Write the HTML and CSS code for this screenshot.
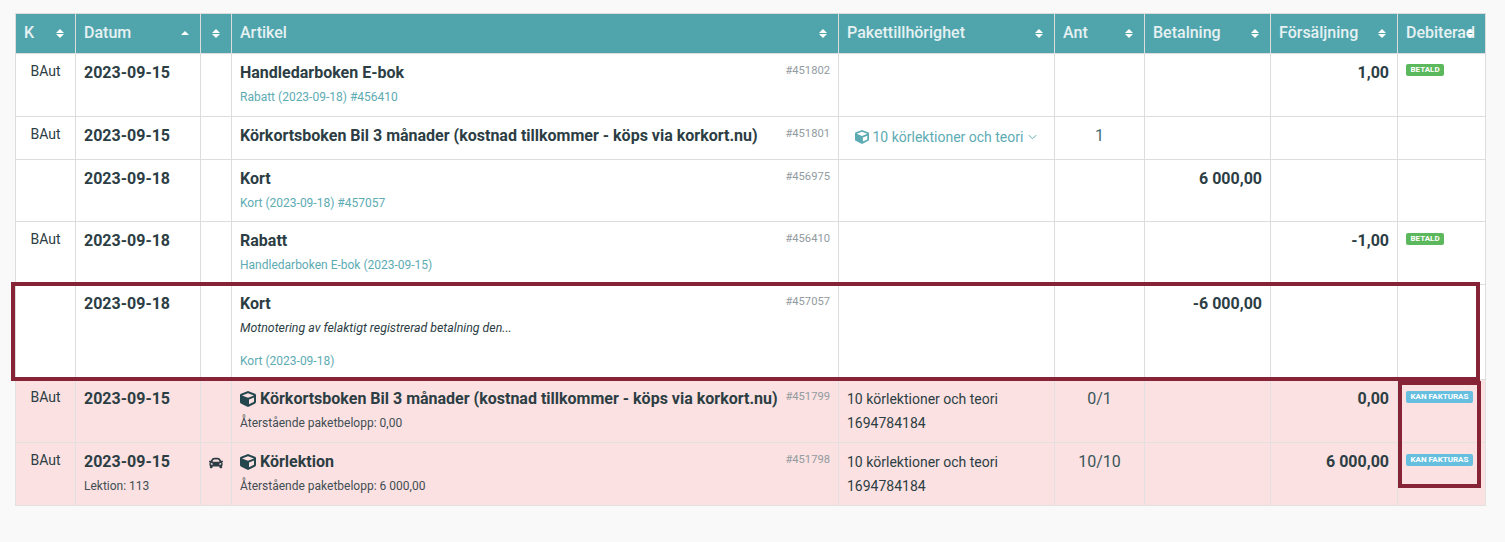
FILE: index.html
```html
<!DOCTYPE html>
<html lang="sv">
<head>
<meta charset="utf-8">
<title>Artiklar</title>
<link rel="stylesheet" href="styles.css">
</head>
<body>
<svg class="defs" width="0" height="0" aria-hidden="true">
  <symbol id="cube" viewBox="0 0 512 512">
    <path fill="currentColor" fill-rule="evenodd" d="M239.100 6.300l-208 78c-18.700 7-31.100 25-31.100 45v225.100c0 18.200 10.300 34.800 26.500 42.900l208 104c13.500 6.800 29.400 6.800 42.900 0l208-104c16.300-8.100 26.500-24.800 26.500-42.900V129.300c0-20-12.400-37.900-31.100-44.900l-208-78C262 2.200 250 2.200 239.100 6.300zM256 68.400l192 72v1.100l-192 78-192-78v-1.100l192-72zm32 356V275.500l160-65v133.900l-160 80z"/>
  </symbol>
  <symbol id="car" viewBox="0 0 512 512">
    <path fill="currentColor" d="M499.990 176h-59.870l-16.640-41.600C406.380 91.630 365.570 64 319.500 64h-127c-46.060 0-86.880 27.630-103.990 70.400L71.870 176H12.010C4.200 176-1.530 183.340.37 190.910l6 24C7.700 220.250 12.500 224 18.010 224h20.070C24.650 235.730 16 252.780 16 272v48c0 16.120 6.160 30.670 16 41.930V416c0 17.670 14.330 32 32 32h32c17.670 0 32-14.330 32-32v-32h256v32c0 17.670 14.330 32 32 32h32c17.670 0 32-14.330 32-32v-54.070c9.840-11.250 16-25.800 16-41.930v-48c0-19.220-8.650-36.270-22.070-48H494c5.510 0 10.310-3.750 11.640-9.090l6-24c1.890-7.570-3.840-14.910-11.650-14.910zm-352.060-17.830c7.290-18.220 24.940-30.170 44.570-30.170h127c19.630 0 37.280 11.950 44.570 30.170L384 208H128l19.930-49.830zM96 319.800c-19.200 0-32-12.760-32-31.900S76.800 256 96 256s48 28.710 48 47.850-28.800 15.950-48 15.950zm320 0c-19.200 0-48 3.190-48-15.950S396.800 256 416 256s32 12.760 32 31.900-12.800 31.900-32 31.900z"/>
  </symbol>
</svg>
<main class="page">
  <div class="table-wrap">
    <table class="grid">
      <colgroup>
        <col class="c-k"><col class="c-date"><col class="c-icon"><col class="c-art"><col class="c-pkg"><col class="c-ant"><col class="c-pay"><col class="c-sale"><col class="c-deb">
      </colgroup>
      <thead>
        <tr>
          <th class="sort">K</th>
          <th class="sort asc">Datum</th>
          <th class="sort"></th>
          <th class="sort">Artikel</th>
          <th class="sort">Pakettillhörighet</th>
          <th class="sort">Ant</th>
          <th class="sort">Betalning</th>
          <th class="sort">Försäljning</th>
          <th class="sort">Debiterad</th>
        </tr>
      </thead>
      <tbody>
        <tr class="r1">
          <td class="k">BAut</td>
          <td class="date">2023-09-15</td>
          <td></td>
          <td class="art"><span class="id">#451802</span><div class="title">Handledarboken E-bok</div><div class="sub"><span class="link">Rabatt</span> <span class="link">(2023-09-18) #456410</span></div></td>
          <td></td><td></td><td></td>
          <td class="num">1,00</td>
          <td><span class="badge paid">Betald</span></td>
        </tr>
        <tr class="r2">
          <td class="k">BAut</td>
          <td class="date">2023-09-15</td>
          <td></td>
          <td class="art"><span class="id">#451801</span><div class="title">Körkortsboken Bil 3 månader (kostnad tillkommer - köps via korkort.nu)</div></td>
          <td class="pkg-link"><svg class="i-cube-sm"><use href="#cube"/></svg> 10 körlektioner och teori <svg class="chev" viewBox="0 0 10 6"><path d="M1 1l4 4 4-4" fill="none" stroke="currentColor" stroke-width="1.100"/></svg></td>
          <td class="ant">1</td>
          <td></td><td></td><td></td>
        </tr>
        <tr class="r3">
          <td></td>
          <td class="date">2023-09-18</td>
          <td></td>
          <td class="art"><span class="id">#456975</span><div class="title">Kort</div><div class="sub"><span class="link">Kort (2023-09-18) #457057</span></div></td>
          <td></td><td></td>
          <td class="num">6 000,00</td>
          <td></td><td></td>
        </tr>
        <tr class="r4">
          <td class="k">BAut</td>
          <td class="date">2023-09-18</td>
          <td></td>
          <td class="art"><span class="id">#456410</span><div class="title">Rabatt</div><div class="sub"><span class="link">Handledarboken E-bok (2023-09-15)</span></div></td>
          <td></td><td></td><td></td>
          <td class="num">-1,00</td>
          <td><span class="badge paid">Betald</span></td>
        </tr>
        <tr class="r5">
          <td></td>
          <td class="date">2023-09-18</td>
          <td></td>
          <td class="art"><span class="id">#457057</span><div class="title">Kort</div><div class="note">Motnotering av felaktigt registrerad betalning den...</div><div class="sub"><span class="link">Kort (2023-09-18)</span></div></td>
          <td></td><td></td>
          <td class="num">-6 000,00</td>
          <td></td><td></td>
        </tr>
        <tr class="r6 pink">
          <td class="k">BAut</td>
          <td class="date">2023-09-15</td>
          <td></td>
          <td class="art"><span class="id">#451799</span><div class="title"><svg class="i-cube"><use href="#cube"/></svg>Körkortsboken Bil 3 månader (kostnad tillkommer - köps via korkort.nu)</div><div class="sub plain">Återstående paketbelopp: 0,00</div></td>
          <td class="pkg">10 körlektioner och teori<br>1694784184</td>
          <td class="ant">0/1</td>
          <td></td>
          <td class="num">0,00</td>
          <td><span class="badge can">Kan fakturas</span></td>
        </tr>
        <tr class="r7 pink">
          <td class="k">BAut</td>
          <td class="date">2023-09-15<div class="sub plain lesson">Lektion: 113</div></td>
          <td class="car-cell"><svg class="i-car"><use href="#car"/></svg></td>
          <td class="art"><span class="id">#451798</span><div class="title"><svg class="i-cube"><use href="#cube"/></svg>Körlektion</div><div class="sub plain">Återstående paketbelopp: 6 000,00</div></td>
          <td class="pkg">10 körlektioner och teori<br>1694784184</td>
          <td class="ant">10/10</td>
          <td></td>
          <td class="num">6 000,00</td>
          <td><span class="badge can">Kan fakturas</span></td>
        </tr>
      </tbody>
    </table>
    <div class="mark mark-row"></div>
    <div class="mark mark-cell"></div>
  </div>
</main>
</body>
</html>
```
FILE: styles.css
```css
* { box-sizing: border-box; }
html, body { margin: 0; padding: 0; }
body {
  height: 542px;
  overflow: hidden;
  background: #f9f9f9;
  font-family: Roboto, "Liberation Sans", sans-serif;
  color: #2c3e44;
}
.defs { position: absolute; }
.page { padding: 13px 20px 0 15px; }
.table-wrap { position: relative; width: 1470px; }
.grid {
  width: 1470px;
  table-layout: fixed;
  border-collapse: collapse;
  background: #fff;
  font-size: 14px;
  border: 1px solid #ddd;
}
.c-k { width: 60px; }
.c-date { width: 125px; }
.c-icon { width: 31px; }
.c-art { width: 607px; }
.c-pkg { width: 216px; }
.c-ant { width: 90px; }
.c-pay { width: 126px; }
.c-sale { width: 127px; }
.c-deb { width: 88px; }
th, td { border: 1px solid #ddd; vertical-align: top; padding: 8px; }
thead tr { height: 40px; }
th {
  background: #50a5ad;
  color: #e6f1f2;
  font-size: 16px;
  font-weight: 500;
  text-align: left;
  white-space: nowrap;
  position: relative;
  line-height: 22px;
  padding: 8px;
}
th.sort::before,
th.sort::after {
  content: "";
  position: absolute;
  right: 11px;
  width: 8px;
  height: 4px;
  background: #fff;
}
th.sort::before { top: 15px; clip-path: polygon(50% 0, 100% 100%, 0 100%); }
th.sort::after { top: 20px; clip-path: polygon(0 0, 100% 0, 50% 100%); }
th.asc::before { top: 17px; }
th.asc::after { display: none; }
.r1 { height: 63px; }
.r2 { height: 43px; }
.r3 { height: 62px; }
.r4 { height: 63px; }
.r5 { height: 95px; }
.r6 { height: 63px; }
.r7 { height: 63px; }
.pink td { background: #fbe1e1; border-color: #e3e0e0; }
.k { text-align: center; font-size: 14px; line-height: 20px; padding-top: 7px; }
.date { font-size: 16px; font-weight: 700; line-height: 22px; padding-top: 8px; }
.art { position: relative; }
.id { position: absolute; right: 8px; top: 9px; font-size: 11.2px; line-height: 16px; color: #929b9f; }
.title { font-size: 16px; font-weight: 700; line-height: 22px; white-space: nowrap; }
.sub { font-size: 12px; line-height: 17px; margin-top: 5px; font-weight: 400; }
.sub.plain { color: #3f4e54; }
.link { color: #5dabb3; }
.note { font-size: 12.35px; font-style: italic; line-height: 17px; margin-top: 5px; margin-bottom: 16px; }
.note + .sub { margin-top: 0; }
.num { font-size: 16px; font-weight: 700; line-height: 22px; text-align: right; }
.ant { font-size: 16px; text-align: center; line-height: 22px; color: #3f6a70; }
.pink .ant { color: #3a555b; }
.pkg { font-size: 14px; line-height: 23.5px; padding: 8px 8px 6px; }
.pkg-link { color: #5dabb3; font-size: 14px; line-height: 22px; padding: 9px 8px 8px 16px; white-space: nowrap; }
.i-cube-sm { width: 14px; height: 14px; vertical-align: -2px; color: #5dabb3; }
.chev { width: 9px; height: 6px; vertical-align: 2px; margin-left: 1px; color: #5dabb3; }
.i-cube { width: 16px; height: 16px; margin-right: 4px; vertical-align: -3px; color: #24464d; }
.car-cell { text-align: center; padding: 13px 0 0; }
.i-car { width: 14px; height: 14px; display: inline-block; color: #2c3e44; }
.badge {
  display: inline-block;
  vertical-align: top;
  margin-top: 3px;
  padding: 0 4.5px;
  height: 12px;
  line-height: 12px;
  border-radius: 2px;
  font-size: 8px;
  font-weight: 700;
  text-transform: uppercase;
  white-space: nowrap;
  color: #fff;
}
.r1 .badge { margin-top: 2px; }
.paid { background: #5cb85c; }
.can { background: #67bfe0; }
.mark { position: absolute; border: 4px solid #862336; pointer-events: none; }
.mark-row { left: -4px; top: 269px; width: 1469px; height: 99px; }
.mark-cell { left: 1383px; top: 368px; width: 83px; height: 107px; }
```
